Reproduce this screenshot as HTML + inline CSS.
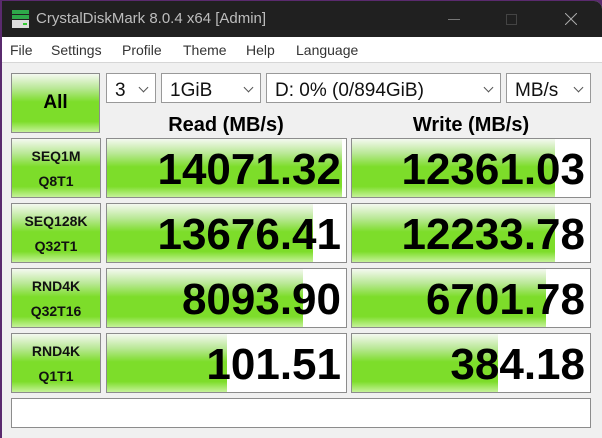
<!DOCTYPE html>
<html><head><meta charset="utf-8"><style>
*{margin:0;padding:0;box-sizing:border-box}
body{width:602px;height:438px;overflow:hidden;background:#5a2a6e;font-family:"Liberation Sans",sans-serif;position:relative}
#win{position:absolute;left:2px;top:1px;right:0;bottom:0;background:#f0f0f0;border-top-right-radius:8px;overflow:hidden}
#title{position:absolute;left:0;top:0;right:0;height:37px;background:#202020;color:#bdbdbd;font-size:15px}
#title .t{position:absolute;left:34px;top:9px}
#menu{position:absolute;left:0;top:36px;right:0;height:26px;background:#fff;border-bottom:1px solid #d6d6d6;font-size:14px;color:#333}
#menu span{position:absolute;top:5px}
.a{position:absolute}
.box{position:absolute;border:1px solid #8c8c8c}
.g{background:linear-gradient(#f4f9f0 0%,#b9e895 25%,#7ddd2a 48%,#7ddd2a 82%,#c6f29a 100%)}
.lab{font-weight:bold;font-size:14px;text-align:center;line-height:25px;padding-top:5px;color:#111}
.val{background:#fff}
.val .f{position:absolute;left:0;top:0;bottom:0}
.val .n{position:absolute;right:5px;top:6px;font-weight:bold;font-size:44px;color:#000}
.cb{position:absolute;top:72px;height:30px;background:#fff;border:1px solid #999;font-size:19px;color:#111;padding:6px 0 0 8px}
.cb i{position:absolute;right:8px;top:10px;width:7px;height:7px;border-right:1px solid #555;border-bottom:1px solid #555;transform:rotate(45deg)}
.hd{position:absolute;top:113px;font-weight:bold;font-size:20px;color:#000;text-align:center}
</style></head><body><div id="win">
<div id="title">
<svg class="a" style="left:9px;top:8px" width="20" height="20"><rect x="1" y="1" width="17" height="4" fill="#2ea84a"/><rect x="1" y="6" width="17" height="4" fill="#2ea84a"/><rect x="1" y="11" width="17" height="8" fill="#ddd"/><rect x="12" y="14" width="4" height="2" fill="#3c3"/></svg>
<span class="t">CrystalDiskMark 8.0.4 x64 [Admin]</span>
<div class="a" style="left:446px;top:18px;width:12px;height:1px;background:#777"></div>
<div class="a" style="left:504px;top:13px;width:11px;height:11px;border:1px solid #444"></div>
<svg class="a" style="left:563px;top:12px" width="12" height="12"><path d="M0 0L12 12M12 0L0 12" stroke="#aaa" stroke-width="1"/></svg>
</div>
<div id="menu"><span style="left:8px">File</span><span style="left:49px">Settings</span><span style="left:120px">Profile</span><span style="left:181px">Theme</span><span style="left:244px">Help</span><span style="left:294px">Language</span></div>

<div class="box g" style="left:9px;top:72px;width:89px;height:60px;font-weight:bold;font-size:19px;text-align:center;line-height:58px">All</div>
<div class="cb" style="left:104px;width:50px">3<i></i></div>
<div class="cb" style="left:159px;width:100px">1GiB<i></i></div>
<div class="cb" style="left:264px;width:235px">D: 0% (0/894GiB)<i></i></div>
<div class="cb" style="left:504px;width:85px">MB/s<i></i></div>
<div class="hd" style="left:104px;width:240px">Read (MB/s)</div>
<div class="hd" style="left:349px;width:240px">Write (MB/s)</div>

<div class="box g lab" style="left:9px;top:137px;width:90px;height:60px">SEQ1M<br>Q8T1</div>
<div class="box val" style="left:104px;top:137px;width:241px;height:60px"><div class="f g" style="width:235px"></div><div class="n">14071.32</div></div>
<div class="box val" style="left:349px;top:137px;width:240px;height:60px"><div class="f g" style="width:203px"></div><div class="n">12361.03</div></div>

<div class="box g lab" style="left:9px;top:202px;width:90px;height:60px">SEQ128K<br>Q32T1</div>
<div class="box val" style="left:104px;top:202px;width:241px;height:60px"><div class="f g" style="width:206px"></div><div class="n">13676.41</div></div>
<div class="box val" style="left:349px;top:202px;width:240px;height:60px"><div class="f g" style="width:203px"></div><div class="n">12233.78</div></div>

<div class="box g lab" style="left:9px;top:267px;width:90px;height:60px">RND4K<br>Q32T16</div>
<div class="box val" style="left:104px;top:267px;width:241px;height:60px"><div class="f g" style="width:196px"></div><div class="n">8093.90</div></div>
<div class="box val" style="left:349px;top:267px;width:240px;height:60px"><div class="f g" style="width:194px"></div><div class="n">6701.78</div></div>

<div class="box g lab" style="left:9px;top:332px;width:90px;height:60px">RND4K<br>Q1T1</div>
<div class="box val" style="left:104px;top:332px;width:241px;height:60px"><div class="f g" style="width:120px"></div><div class="n">101.51</div></div>
<div class="box val" style="left:349px;top:332px;width:240px;height:60px"><div class="f g" style="width:146px"></div><div class="n">384.18</div></div>

<div class="box" style="left:9px;top:397px;width:580px;height:30px;background:#fff"></div>
</div></body></html>
